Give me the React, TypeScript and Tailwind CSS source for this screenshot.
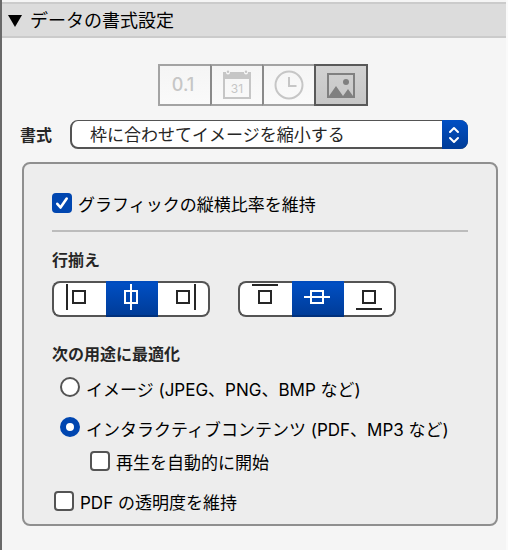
import { useState } from 'react';
import type { ReactNode } from 'react';
import clsx from 'clsx';

type Format = 'number' | 'date' | 'time' | 'graphic';

const FORMATS: { id: Format; label: string; icon: ReactNode }[] = [
  { id: 'number', label: '数値', icon: <span className="pr-1 text-lg leading-6 font-medium">0.1</span> },
  { id: 'date', label: '日付', icon: <CalendarIcon /> },
  { id: 'time', label: '時刻', icon: <ClockIcon /> },
  { id: 'graphic', label: 'グラフィック', icon: <PictureIcon /> },
];

function CalendarIcon() {
  return (
    <svg width="28" height="30" viewBox="0 0 28 30" aria-hidden="true">
      <rect x="1" y="3" width="26" height="25" fill="none" stroke="currentColor" strokeWidth="2" />
      <rect x="0" y="2" width="28" height="7" fill="currentColor" />
      <circle cx="5" cy="2.5" r="2" fill="#f8f8f8" />
      <circle cx="23" cy="2.5" r="2" fill="#f8f8f8" />
      <circle cx="5" cy="1.8" r="1.2" fill="currentColor" />
      <circle cx="23" cy="1.8" r="1.2" fill="currentColor" />
      <text x="14" y="23" textAnchor="middle" fontSize="12" fill="currentColor">
        31
      </text>
    </svg>
  );
}

function ClockIcon() {
  return (
    <svg width="30" height="30" viewBox="0 0 30 30" fill="none" stroke="currentColor" aria-hidden="true">
      <circle cx="15" cy="15" r="13.5" strokeWidth="2" />
      <path d="M15 7v9h7.5" strokeWidth="2" />
    </svg>
  );
}

function PictureIcon() {
  return (
    <svg width="28" height="25" viewBox="0 0 28 25" aria-hidden="true">
      <rect x="1" y="1" width="26" height="23" fill="none" stroke="currentColor" strokeWidth="2" />
      <circle cx="19" cy="9" r="3" fill="currentColor" />
      <path d="M2 23 9 13 16 23ZM16 23 21 16 26 23Z" fill="currentColor" />
    </svg>
  );
}

// Guide line drawn next to or through the small box of an alignment icon.
const GUIDES = {
  left: 'M2 0v26',
  center: 'M14 0v26',
  right: 'M26 0v26',
  top: 'M1 1h26',
  middle: 'M1 13h26',
  bottom: 'M1 25h26',
};

type Align = keyof typeof GUIDES;

const HORIZONTAL: { id: Align; label: string }[] = [
  { id: 'left', label: '左揃え' },
  { id: 'center', label: '中央揃え' },
  { id: 'right', label: '右揃え' },
];

const VERTICAL: { id: Align; label: string }[] = [
  { id: 'top', label: '上揃え' },
  { id: 'middle', label: '上下中央揃え' },
  { id: 'bottom', label: '下揃え' },
];

function AlignGroup({ label, options, initial }: { label: string; options: typeof HORIZONTAL; initial: Align }) {
  const [value, setValue] = useState(initial);

  return (
    <div role="group" aria-label={label} className="grid h-9 grid-cols-[54px_52px_52px]">
      {options.map((option) => {
        const active = option.id === value;
        return (
          <button
            key={option.id}
            type="button"
            aria-label={option.label}
            aria-pressed={active}
            onClick={() => setValue(option.id)}
            className={clsx(
              'flex items-start justify-center border-y-2 pt-px pr-0.5 first:rounded-l-lg first:border-l-2 last:rounded-r-lg last:border-r-2 last:pr-0',
              active
                ? 'border-t-[#004bbd] border-b-[#00307c] bg-linear-to-b from-[#004fc4] to-[#003c98] text-white'
                : 'border-[#545454] bg-white text-[#262626]',
            )}
          >
            <svg width="28" height="26" viewBox="0 0 28 26" fill="none" stroke="currentColor" strokeWidth="2" aria-hidden="true">
              <rect x="8" y="7" width="12" height="12" />
              <path d={GUIDES[option.id]} />
            </svg>
          </button>
        );
      })}
    </div>
  );
}

function CheckBox({ label, className, defaultChecked }: { label: string; className?: string; defaultChecked?: boolean }) {
  return (
    <label className={clsx('flex h-5 items-start gap-1.5 text-[17px] whitespace-nowrap', className)}>
      <span className="relative size-5 shrink-0">
        <input
          type="checkbox"
          defaultChecked={defaultChecked}
          className="peer block size-5 appearance-none rounded border-2 border-[#545454] bg-white checked:border-0 checked:bg-[#0046b0]"
        />
        <svg
          className="pointer-events-none absolute inset-0 hidden peer-checked:block"
          width="20"
          height="20"
          viewBox="0 0 20 20"
          fill="none"
          stroke="#fff"
          strokeWidth="2.6"
          strokeLinecap="round"
          strokeLinejoin="round"
          aria-hidden="true"
        >
          <path d="m5.3 10.8 3.2 3.7 6.2-9" />
        </svg>
      </span>
      <span className="leading-6">{label}</span>
    </label>
  );
}

function Radio({ label, className, defaultChecked }: { label: string; className?: string; defaultChecked?: boolean }) {
  return (
    <label className={clsx('flex h-5 items-start gap-1.5 text-[17px] whitespace-nowrap', className)}>
      <input
        type="radio"
        name="optimize"
        defaultChecked={defaultChecked}
        className="size-5 shrink-0 appearance-none rounded-full border-2 border-[#545454] bg-white checked:border-[6px] checked:border-[#0046b0]"
      />
      <span className="leading-[26px]">{label}</span>
    </label>
  );
}

export default function App() {
  const [format, setFormat] = useState<Format>('graphic');

  return (
    <main className="min-h-screen border-r-2 border-l-2 border-r-[#fafafa] border-l-[#696969] bg-[#f5f5f5] pt-0.5 font-['Inter','Noto_Sans_CJK_JP',sans-serif] text-black">
      <h1 className="border-y-2 border-[#cbcbcb] bg-[#dcdcdc]">
        <button type="button" aria-expanded="true" className="flex h-8 w-full items-center gap-2 pt-0.5 pl-1.5 text-lg">
          <svg width="14" height="12" viewBox="0 0 14 12" aria-hidden="true">
            <path d="M0 0h14L7 12Z" />
          </svg>
          データの書式設定
        </button>
      </h1>

      <div className="flex justify-center pt-[26px] pl-[18px]">
        <div role="group" aria-label="データ形式" className="flex">
          {FORMATS.map(({ id, label, icon }) => (
            <button
              key={id}
              type="button"
              aria-label={label}
              aria-pressed={id === format}
              onClick={() => setFormat(id)}
              className={clsx(
                'flex h-[42px] w-[54px] items-center justify-center border-2 not-first:-ml-0.5',
                id === format
                  ? 'z-10 border-[#595959] bg-linear-to-b from-[#d2d2d2] to-[#c6c6c6] text-[#808080]'
                  : 'border-[#a3a3a3] border-r-[#8a8a8a] bg-linear-to-b from-[#f5f5f5] to-[#fafafa] text-[#c6c6c6] not-first:border-l-[#8a8a8a]',
              )}
            >
              {icon}
            </button>
          ))}
        </div>
      </div>

      <div className="flex items-center pt-3.5 pr-[38px] pl-[18px]">
        <label htmlFor="format" className="w-[50px] shrink-0 text-base font-bold text-[#262626]">
          書式
        </label>
        <div className="relative min-w-0 flex-1">
          <select
            id="format"
            className="block h-[29px] w-full appearance-none rounded-lg border-2 border-t border-[#545454] bg-white pt-0.5 pr-8 pl-[18px] text-[17px] leading-6 text-[#262626]"
          >
            <option>枠に合わせてイメージを縮小する</option>
            <option>枠に合わせてイメージを拡大する</option>
            <option>枠に合わせてイメージを縮小または拡大する</option>
          </select>
          <span className="pointer-events-none absolute inset-y-0 right-0 flex w-[26px] items-center justify-center rounded-r-lg bg-linear-to-b from-[#004fc4] to-[#003c98] pr-0.5">
            <svg
              width="12"
              height="18"
              viewBox="0 0 12 18"
              fill="none"
              stroke="#fff"
              strokeWidth="2"
              strokeLinecap="round"
              strokeLinejoin="round"
              aria-hidden="true"
            >
              <path d="m2 6 4-4 4 4M2 12l4 4 4-4" />
            </svg>
          </span>
        </div>
      </div>

      <section className="mt-[13px] mr-2 ml-5 rounded-lg border-2 border-[#8f8f8f] bg-[#ededed] px-7 pt-[29px] pb-[13px]">
        <CheckBox label="グラフィックの縦横比率を維持" defaultChecked />
        <hr className="mt-[17px] border-t-2 border-[#bcbcbc]" />

        <h2 className="mt-[18px] text-base leading-5 font-bold text-[#262626]">行揃え</h2>
        <div className="mt-[11px] flex gap-7">
          <AlignGroup label="横方向" options={HORIZONTAL} initial="center" />
          <AlignGroup label="縦方向" options={VERTICAL} initial="middle" />
        </div>

        <fieldset className="mt-[27px]">
          <legend className="text-base leading-5 font-bold text-[#262626]">次の用途に最適化</legend>
          <Radio className="mt-[13px] ml-2" label="イメージ (JPEG、PNG、BMP など)" />
          <Radio className="mt-5 ml-2" label="インタラクティブコンテンツ (PDF、MP3 など)" defaultChecked />
          <CheckBox className="mt-3.5 ml-[38px]" label="再生を自動的に開始" />
        </fieldset>
        <CheckBox className="mt-5 ml-0.5" label="PDF の透明度を維持" />
      </section>
    </main>
  );
}
